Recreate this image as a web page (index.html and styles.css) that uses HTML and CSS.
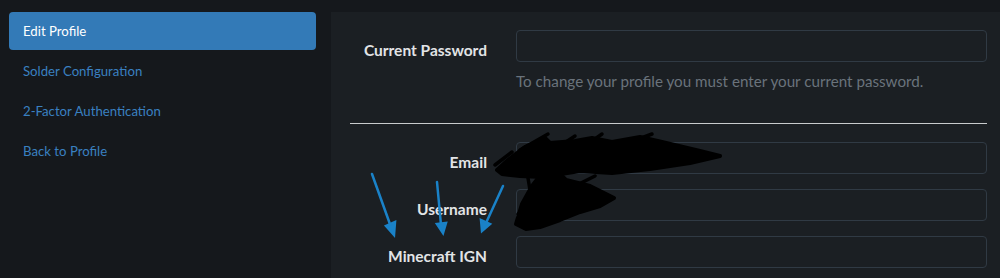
FILE: index.html
```html
<!DOCTYPE html>
<html>
<head>
    <meta charset="utf-8">
    <link rel="stylesheet" href="styles.css">
</head>
<body>
    <div class="page">
        <div class="sidebar">
            <a class="nav_item active" href="#">Edit Profile</a>
            <a class="nav_item" href="#">Solder Configuration</a>
            <a class="nav_item" href="#">2-Factor Authentication</a>
            <a class="nav_item" href="#">Back to Profile</a>
        </div>

        <div class="panel">
            <div class="form_row">
                <label class="form_label">Current Password</label>
                <div class="form_field">
                    <input class="form_input" type="password">
                    <div class="help_text">To change your profile you must enter your current password.</div>
                </div>
            </div>

            <hr class="divider">

            <div class="form_row">
                <label class="form_label">Email</label>
                <div class="form_field"><input class="form_input" type="text"></div>
            </div>
            <div class="form_row">
                <label class="form_label">Username</label>
                <div class="form_field"><input class="form_input" type="text"></div>
            </div>
            <div class="form_row">
                <label class="form_label">Minecraft IGN</label>
                <div class="form_field"><input class="form_input" type="text"></div>
            </div>

            <!-- marcas encima del formulario (coordenadas de la pagina) -->
            <svg class="marks" width="669" height="266" viewBox="331 12 669 266">
                <g fill="#000" stroke="#000" stroke-width="4" stroke-linejoin="round" stroke-linecap="round">
                    <path d="M497 170 L508 160 L525 147 L545 138 L550 143 L575 141 L592 138 L612 142 L640 137 L662 142 L700 151 L720 156 L690 163 L650 169 L612 173 L580 171 L542 177 L520 176 L502 174 Z"/>
                    <path d="M516 224 L522 204 L532 186 L543 172 L556 170 L566 180 L590 186 L614 198 L600 206 L580 212 L560 220 L540 227 L526 229 Z"/>
                </g>
                <g fill="none" stroke="#000" stroke-width="3.5" stroke-linecap="round">
                    <path d="M520 150 L548 134"/>
                    <path d="M560 146 L575 136"/>
                    <path d="M585 146 L602 134"/>
                    <path d="M620 146 L652 134"/>
                    <path d="M495 165 L512 152"/>
                    <path d="M600 172 L640 164"/>
                    <path d="M545 178 L552 166"/>
                    <path d="M530 190 L528 178"/>
                    <path d="M575 186 L595 176"/>
                    <path d="M518 214 L545 190"/>
                    <path d="M525 228 L560 210"/>
                </g>
                <g stroke="#1a82c8" stroke-width="2.5" stroke-linecap="round" fill="#1a82c8">
                    <line x1="372" y1="174" x2="391" y2="227"/>
                    <polygon points="386,226 394,235 395,222"/>
                    <line x1="437" y1="182" x2="441" y2="225"/>
                    <polygon points="437,224 443,233 446,223"/>
                    <line x1="503" y1="186" x2="486" y2="223"/>
                    <polygon points="481,220 482,231 490,224"/>
                </g>
            </svg>
        </div>
    </div>
</body>
</html>
```

FILE: styles.css
```css
body {
    margin: 0;
    background-color: #15181c;
    font-family: 'Lato', 'Liberation Sans', sans-serif;
    font-size: 13.2px;
}

.page {
    display: flex;
    height: 278px;
    overflow: hidden;
}

/* MENU DE LA IZQUIERDA */
.sidebar {
    width: 307px;
    padding: 12px 15px 0 9px;
    display: flex;
    flex-direction: column;
    gap: 2px;
}

.nav_item {
    display: block;
    height: 38px;
    line-height: 38px;
    padding: 0 14px;
    border-radius: 4px;
    color: #3a80c1;
    text-decoration: none;
}

.nav_item.active {
    background-color: #337ab7;
    color: #ffffff;
}

/* PANEL DEL FORMULARIO */
.panel {
    position: relative;
    flex: 1;
    margin-top: 12px;
    padding: 18px 13px 0 19px;
    background-color: #1b1f23;
}

.form_row {
    display: flex;
    gap: 29px;
    margin-bottom: 15px;
}

.form_label {
    width: 137px;
    flex-shrink: 0;
    padding-top: 10px;
    line-height: 20px;
    text-align: right;
    font-size: 15.5px;
    font-weight: bold;
    color: #e2e4e6;
}

.form_field {
    flex: 1;
}

.form_input {
    display: block;
    box-sizing: border-box;
    width: 100%;
    height: 32px;
    background-color: #1b1f23;
    border: 1px solid #303a44;
    border-radius: 4px;
}

.help_text {
    margin-top: 9px;
    line-height: 20px;
    color: #6a737c;
    font-size: 15.2px;
}

.divider {
    margin: 32px 0 18px 0;
    border: none;
    border-top: 1px solid #c9cbcd;
}

.marks {
    position: absolute;
    left: 0;
    top: 0;
    pointer-events: none;
}
```
